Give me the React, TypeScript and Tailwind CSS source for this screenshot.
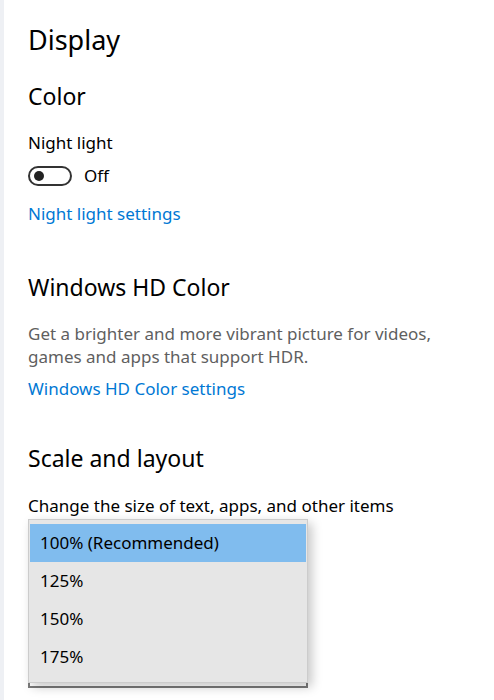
export default function App() {
  const options = ['100% (Recommended)', '125%', '150%', '175%'];

  return (
    <div className="flex min-h-[700px] bg-white font-['Noto_Sans',sans-serif] text-black">
      {/* left strip */}
      <div className="w-[4px] shrink-0 bg-[#eef0f4]" />

      <div className="flex flex-col pl-[24px] pt-[20px]">
        <h1 className="text-[27px] leading-[40px] font-normal">Display</h1>

        <h2 className="mt-[21px] text-[23px] leading-[30px]">Color</h2>

        <div className="mt-[22px] text-[17px] leading-[20px]">Night light</div>
        <div className="mt-[13px] flex items-center gap-[12px]">
          <div className="flex h-[20px] w-[44px] items-center rounded-full border-2 border-[#333]">
            <div className="ml-[4px] h-[10px] w-[10px] rounded-full bg-[#222]" />
          </div>
          <span className="text-[17px] leading-[20px]">Off</span>
        </div>
        <a className="mt-[18px] text-[17px] leading-[20px] text-[#0078d4]">Night light settings</a>

        <h2 className="mt-[48px] text-[23px] leading-[30px]">Windows HD Color</h2>
        <p className="mt-[20px] w-[440px] text-[17px] leading-[23px] text-[#5f5f5f]">
          Get a brighter and more vibrant picture for videos, games and apps that support HDR.
        </p>
        <a className="mt-[11px] text-[17px] leading-[20px] text-[#0078d4]">Windows HD Color settings</a>

        <h2 className="mt-[44px] text-[23px] leading-[30px]">Scale and layout</h2>
        <div className="mt-[23px] text-[17px] leading-[20px]">Change the size of text, apps, and other items</div>

        <div className="relative mt-[3px] w-[280px] pt-[137px]">
          {/* combobox behind */}
          <div className="h-[32px] w-[280px] border-2 border-[#7a7a7a]" />

          {/* open list */}
          <ul className="absolute left-0 top-0 w-[280px] border border-[#cccccc] bg-[#e6e6e6] px-[1px] pt-[4px] pb-[6px] shadow-[4px_4px_10px_rgba(0,0,0,0.22)]">
            {options.map((o, i) => (
              <li
                key={o}
                className={
                  i === 0
                    ? 'flex h-[38px] items-center bg-[#80bcee] pl-[10px] text-[17px]'
                    : 'flex h-[38px] items-center pl-[10px] text-[17px]'
                }
              >
                {o}
              </li>
            ))}
          </ul>
        </div>
      </div>
    </div>
  );
}
